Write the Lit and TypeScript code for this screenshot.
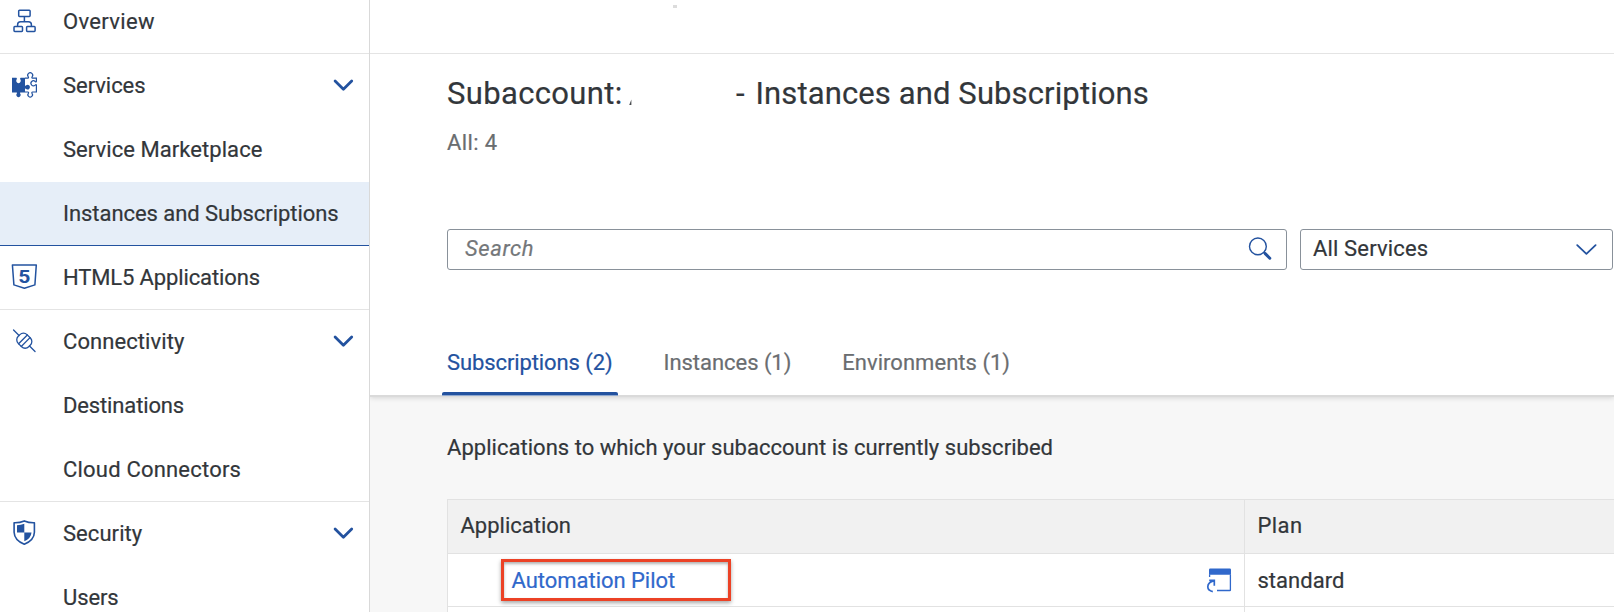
import { LitElement, html, svg, css, nothing } from "lit";
import { customElement, property } from "lit/decorators.js";
import { classMap } from "lit/directives/class-map.js";
import { styleMap } from "lit/directives/style-map.js";

interface NavEntry {
  label: string;
  icon?: string;
  expandable?: boolean;
  selected?: boolean;
  divider?: boolean;
  tracking: number;
}

const NAV: NavEntry[] = [
  { label: "Overview", icon: "overview", divider: true, tracking: 0.34 },
  { label: "Services", icon: "services", expandable: true, tracking: -0.05 },
  { label: "Service Marketplace", tracking: 0.06 },
  { label: "Instances and Subscriptions", selected: true, tracking: -0.05 },
  { label: "HTML5 Applications", icon: "html5", divider: true, tracking: -0.13 },
  { label: "Connectivity", icon: "connectivity", expandable: true, tracking: 0.08 },
  { label: "Destinations", tracking: -0.14 },
  { label: "Cloud Connectors", divider: true, tracking: 0.2 },
  { label: "Security", icon: "security", expandable: true, tracking: 0.06 },
  { label: "Users", tracking: -0.1 },
];

const TABS = [
  { label: "Subscriptions (2)", active: true, tracking: -0.1 },
  { label: "Instances (1)", active: false, tracking: -0.04 },
  { label: "Environments (1)", active: false, tracking: 0.03 },
];

const GLYPHS: Record<string, unknown> = {
  overview: svg`
    <g fill="none" stroke="currentColor" stroke-width="1.5" stroke-linejoin="round">
      <rect x="8.7" y="3.2" width="11.4" height="6.2" rx="0.8"/>
      <rect x="4" y="19.6" width="8.5" height="4.8" rx="0.8"/>
      <rect x="16.6" y="19.6" width="8.5" height="4.8" rx="0.8"/>
      <path d="M14.4 9.4V14.8M7.6 19.4V17.8Q7.6 14.8 10.6 14.8H18.4Q21.4 14.8 21.4 17.8V19.4"/>
    </g>`,
  services: svg`
    <path fill="currentColor" d="M2 6.7H6.4Q7.4 7.3 6.6 8.6A2.3 2.3 0 1 0 10.4 8.6Q9.6 7.3 10.6 6.7H15V14.6Q15.2 15.2 16.2 14.3A2.3 2.3 0 1 1 16.2 17.9Q15.2 17.1 15 17.8V21.4H10.4Q9.5 21.6 10.2 22.6A2.2 2.2 0 1 1 6.8 22.6Q7.5 21.6 6.6 21.4H2Z"/>
    <path fill="none" stroke="currentColor" stroke-width="1.2" d="M15 7.2H17.8Q19 7 18.2 5.7A2.5 2.5 0 1 1 22.2 5.7Q21.4 7 22.6 7.2H26.4V10.4Q26.2 11.3 25.2 10.5A2.5 2.5 0 1 0 25.2 14.1Q26.2 13.2 26.4 14.2V21H22.6Q21.4 21.2 22 22.3A2.3 2.3 0 1 1 18.4 22.3Q19 21.2 17.8 21H15"/>`,
  html5: svg`
    <path fill="none" stroke="currentColor" stroke-width="1.5" stroke-linejoin="round" d="M2.4 1.9H26.3L24.9 21.9L14.4 25.3L3.9 21.9Z"/>
    <text class="five" transform="translate(14.4 19.6) scale(1.2 1)" text-anchor="middle">5</text>`,
  connectivity: svg`
    <g fill="none" stroke="currentColor" stroke-width="1.3" stroke-linecap="round" transform="translate(14.3 13.7) rotate(45)">
      <path d="M-15.2 0H-7.4M7.4 0H15.2M-1.9 -6.2V6.2M1.9 -6.2V6.2"/>
      <rect x="-7.4" y="-6.2" width="14.8" height="12.4" rx="5"/>
    </g>`,
  security: svg`
    <path fill="none" stroke="currentColor" stroke-width="1.6" stroke-linejoin="round" d="M14.3 1.9Q19 3.9 24.4 3.7V13.2Q24.2 21.2 14.3 25.2Q4.4 21.2 4.1 13.2V3.7Q9.6 3.9 14.3 1.9Z"/>
    <path fill="currentColor" d="M14.3 4.8V13.4H21.5Q21.2 19 14.3 22.3V13.4H7V6.2Q11 6.1 14.3 4.8Z"/>`,
};

@customElement("nav-row")
class NavRow extends LitElement {
  @property({ attribute: false }) entry!: NavEntry;

  static styles = css`
    :host { display: block; }
    .row {
      box-sizing: border-box;
      height: 64px;
      display: flex;
      align-items: center;
      padding: 0 15px 0 10px;
      border-bottom: 1px solid transparent;
      color: #32363a;
    }
    .row.divider { border-bottom-color: #e4e4e4; }
    .row.selected { background: #e6eef8; border-bottom-color: #23529f; }
    .icon { width: 29px; height: 29px; margin-right: 24px; color: #2353a0; flex: none; }
    .icon svg { display: block; width: 29px; height: 29px; }
    .five { font: 700 17.6px Roboto, sans-serif; fill: currentColor; stroke: none; -webkit-text-stroke: 0; }
    .label { flex: 1; font-size: 22px; line-height: 28px; white-space: nowrap; }
    .chevron { display: block; flex: none; }
  `;

  render() {
    const e = this.entry;
    return html`
      <div class=${classMap({ row: true, divider: !!e.divider, selected: !!e.selected })}>
        <span class="icon">
          ${e.icon ? html`<svg viewBox="0 0 29 29">${GLYPHS[e.icon]}</svg>` : nothing}
        </span>
        <span class="label" style=${styleMap({ letterSpacing: `${e.tracking}px` })}>${e.label}</span>
        ${e.expandable
          ? html`<svg class="chevron" width="21" height="13" viewBox="0 0 21 13">
              <path d="M2.1 2.1L10.4 10.2L18.7 2.1" fill="none" stroke="#23529f" stroke-width="2.8" stroke-linecap="round" stroke-linejoin="round"/>
            </svg>`
          : nothing}
      </div>
    `;
  }
}

@customElement("app-root")
class AppRoot extends LitElement {
  static styles = css`
    :host {
      display: block;
      height: 612px;
      overflow: hidden;
      background: #fff;
      color: #32363a;
      font: 22px/28px Roboto, "Liberation Sans", sans-serif;
      -webkit-text-stroke: 0.2px currentColor;
    }
    .shell { display: flex; height: 612px; overflow: hidden; }
    .side {
      flex: none;
      width: 369px;
      border-right: 1px solid #d9d9d9;
      overflow: hidden;
    }
    .side-list { margin-top: -10px; }
    .main { flex: 1; min-width: 0; display: flex; flex-direction: column; background: #f7f7f7; }
    .topbar {
      flex: none;
      box-sizing: border-box;
      height: 54px;
      padding: 5px 0 0 303px;
      border-bottom: 1px solid #e4e4e4;
      background: #fff;
    }
    .speck { width: 4px; height: 3px; background: #dcdcdc; }
    .head {
      flex: none;
      box-sizing: border-box;
      height: 343px;
      padding: 20px 1px 0 77px;
      background: #fff;
      border-bottom: 2px solid #dadada;
      box-shadow: 0 1px 5px rgba(0, 0, 0, 0.14);
      clip-path: inset(0 0 -12px 0);
      display: flex;
      flex-direction: column;
    }
    .title {
      margin: 0;
      display: flex;
      font-weight: 400;
      font-size: 31px;
      line-height: 40px;
      white-space: pre;
    }
    .title-kind { width: 182px; letter-spacing: 0.35px; }
    .title-name { width: 107px; height: 31px; display: flex; align-items: flex-end; }
    .title-page { letter-spacing: 0.12px; }
    .dash { margin-right: 3px; }
    .count { margin-top: 15px; color: #6a6d70; letter-spacing: 0.4px; }
    .filters { display: flex; gap: 13px; margin-top: 72px; }
    .field {
      box-sizing: border-box;
      height: 41px;
      display: flex;
      align-items: center;
      justify-content: space-between;
      border: 1px solid #89919a;
      border-radius: 3px;
      background: #fff;
    }
    .field span { padding-bottom: 2px; }
    .search { width: 840px; padding: 0 14px 0 17px; }
    .search span { font-style: italic; color: #74777a; letter-spacing: 0.6px; }
    .search svg { margin-bottom: 1px; }
    .select { width: 313px; padding: 0 15px 0 12px; }
    .select span { letter-spacing: 0.15px; }
    .tabs { display: flex; gap: 51px; margin-top: 79px; height: 46px; }
    .tab { position: relative; color: #6a6d70; white-space: nowrap; }
    .tab.active { color: #23529f; }
    .tab.active::after {
      content: "";
      position: absolute;
      left: -5px;
      right: -6px;
      bottom: 0;
      height: 3px;
      border-radius: 2px 2px 0 0;
      background: #23529f;
      box-shadow: 0 1px 0 #8fa8cf;
    }
    .body { padding: 37px 0 0 77px; }
    .intro { letter-spacing: 0.03px; }
    .table {
      margin-top: 37px;
      display: grid;
      grid-template-columns: 797px 1fr;
      grid-template-rows: 54px 53px 40px;
      border-top: 1px solid #e2e2e2;
      border-left: 1px solid #e2e2e2;
    }
    .cell {
      box-sizing: border-box;
      display: flex;
      align-items: center;
      padding: 0 12.5px;
      border-bottom: 1px solid #e2e2e2;
      background: #fff;
    }
    .cell.first { border-right: 1px solid #e2e2e2; }
    .cell.header { background: #f1f1f1; padding-bottom: 1px; }
    .cell.app { justify-content: space-between; padding: 0 12px 0 53px; }
    .marked {
      box-sizing: border-box;
      width: 230px;
      height: 42px;
      padding: 5px 0 0 7.5px;
      border: 3px solid #ec4226;
      box-shadow: 0 2px 4px rgba(0, 0, 0, 0.35), inset 0 2px 3px rgba(0, 0, 0, 0.3);
    }
    .link { color: #3068cb; letter-spacing: -0.03px; text-decoration: none; }
    .plan-head { letter-spacing: 0.4px; }
    .cell.plan { letter-spacing: 0.02px; padding-top: 2px; }
    svg { display: block; flex: none; }
  `;

  render() {
    return html`
      <div class="shell">
        <nav class="side">
          <div class="side-list">${NAV.map((e) => html`<nav-row .entry=${e}></nav-row>`)}</div>
        </nav>
        <main class="main">
          <div class="topbar"><div class="speck"></div></div>
          <header class="head">
            <h1 class="title"><span class="title-kind">Subaccount:</span><span class="title-name"><svg width="4" height="6" viewBox="0 0 4 6"><path d="M0.2 6L2.4 0.5V6Z" fill="#4a4d50"/></svg></span><span class="title-page"><span class="dash">-</span> Instances and Subscriptions</span></h1>
            <div class="count">All: 4</div>
            <div class="filters">
              <div class="field search">
                <span>Search</span>
                <svg width="24" height="24" viewBox="0 0 24 24" fill="none" stroke="#23529f">
                  <circle cx="9.9" cy="9.4" r="8.4" stroke-width="1.4"/>
                  <path d="M16 15.6L17.4 16.8" stroke-width="2"/>
                  <path d="M17.2 16.6L21.8 21.2" stroke-width="3" stroke-linecap="round"/>
                </svg>
              </div>
              <div class="field select">
                <span>All Services</span>
                <svg width="21" height="13" viewBox="0 0 21 13">
                  <path d="M1.2 2.1L10.4 10.9L19.6 2.1" fill="none" stroke="#23529f" stroke-width="1.8" stroke-linecap="round" stroke-linejoin="round"/>
                </svg>
              </div>
            </div>
            <div class="tabs">
              ${TABS.map(
                (t) => html`<div
                  class=${classMap({ tab: true, active: t.active })}
                  style=${styleMap({ letterSpacing: `${t.tracking}px` })}
                >${t.label}</div>`
              )}
            </div>
          </header>
          <section class="body">
            <div class="intro">Applications to which your subaccount is currently subscribed</div>
            <div class="table">
              <div class="cell header first">Application</div>
              <div class="cell header plan-head">Plan</div>
              <div class="cell first app">
                <div class="marked"><a class="link">Automation Pilot</a></div>
                <svg width="26" height="26" viewBox="0 0 26 26">
                  <path d="M3 7.8V2.6Q3 1.4 4.2 1.4H23.8Q25 1.4 25 2.6V7.8Z" fill="#3068cb"/>
                  <path d="M3.6 7.5V10M24.4 7.5V22.9Q24.4 23.5 23.8 23.5H11" fill="none" stroke="#3068cb" stroke-width="1.3"/>
                  <path d="M6.8 24.6Q1.8 23.6 1.8 19.8Q1.9 15.2 8 13.6M3.2 13.4H8.3V18.8" fill="none" stroke="#3068cb" stroke-width="1.7"/>
                </svg>
              </div>
              <div class="cell plan">standard</div>
              <div class="cell first"></div>
              <div class="cell"></div>
            </div>
          </section>
        </main>
      </div>
    `;
  }
}
